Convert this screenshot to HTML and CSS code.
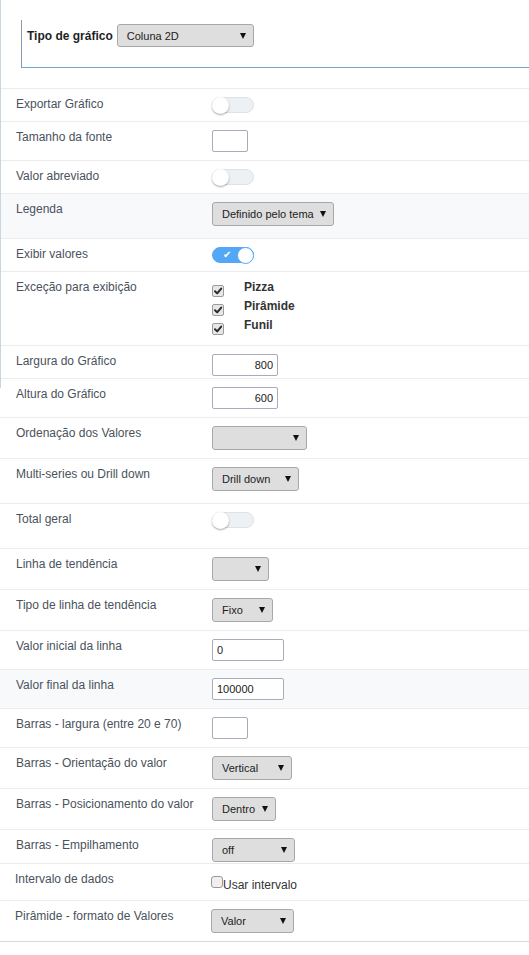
FILE: index.html
```html
<!DOCTYPE html>
<html lang="pt">
<head>
<meta charset="utf-8">
<title>Configuração do gráfico</title>
<link rel="stylesheet" href="styles.css">
</head>
<body>
<div class="page">
  <div class="head">
    <div class="fset">
      <span class="fset-label">Tipo de gráfico</span>
      <div class="sel sel-main"><span>Coluna 2D</span><svg class="arr" width="6" height="6" viewBox="0 0 6 6"><polygon points="0,0 6,0 3,6"/></svg></div>
    </div>
  </div>

  <div class="rows">
    <div class="row h33">
      <div class="lbl">Exportar Gráfico</div>
      <div class="ctl"><span class="tog"><span class="knob"></span></span></div>
    </div>
    <div class="row h39">
      <div class="lbl">Tamanho da fonte</div>
      <div class="ctl"><input class="txt w36" type="text" value=""></div>
    </div>
    <div class="row h33">
      <div class="lbl">Valor abreviado</div>
      <div class="ctl"><span class="tog"><span class="knob"></span></span></div>
    </div>
    <div class="row h45 alt">
      <div class="lbl">Legenda</div>
      <div class="ctl"><div class="sel w122"><span>Definido pelo tema</span><svg class="arr" width="6" height="6" viewBox="0 0 6 6"><polygon points="0,0 6,0 3,6"/></svg></div></div>
    </div>
    <div class="row h33">
      <div class="lbl">Exibir valores</div>
      <div class="ctl"><span class="tog on"><span class="tick">✔</span><span class="knob"></span></span></div>
    </div>
    <div class="row h74">
      <div class="lbl">Exceção para exibição</div>
      <div class="ctl checks">
        <div class="chk-line"><span class="cb"><svg width="10" height="10" viewBox="0 0 10 10"><path d="M2 5.2 L4.2 7.4 L8.2 2.6" /></svg></span><span class="chk-text">Pizza</span></div>
        <div class="chk-line"><span class="cb"><svg width="10" height="10" viewBox="0 0 10 10"><path d="M2 5.2 L4.2 7.4 L8.2 2.6" /></svg></span><span class="chk-text">Pirâmide</span></div>
        <div class="chk-line"><span class="cb"><svg width="10" height="10" viewBox="0 0 10 10"><path d="M2 5.2 L4.2 7.4 L8.2 2.6" /></svg></span><span class="chk-text">Funil</span></div>
      </div>
    </div>
    <div class="row h33">
      <div class="lbl">Largura do Gráfico</div>
      <div class="ctl"><input class="txt w66 right" type="text" value="800"></div>
    </div>
    <div class="row h39">
      <div class="lbl">Altura do Gráfico</div>
      <div class="ctl"><input class="txt w66 right" type="text" value="600"></div>
    </div>
    <div class="row h41">
      <div class="lbl">Ordenação dos Valores</div>
      <div class="ctl"><div class="sel w95"><span></span><svg class="arr" width="6" height="6" viewBox="0 0 6 6"><polygon points="0,0 6,0 3,6"/></svg></div></div>
    </div>
    <div class="row h45">
      <div class="lbl">Multi-series ou Drill down</div>
      <div class="ctl"><div class="sel w87"><span>Drill down</span><svg class="arr" width="6" height="6" viewBox="0 0 6 6"><polygon points="0,0 6,0 3,6"/></svg></div></div>
    </div>
    <div class="row h45">
      <div class="lbl">Total geral</div>
      <div class="ctl"><span class="tog"><span class="knob"></span></span></div>
    </div>
    <div class="row h41">
      <div class="lbl">Linha de tendência</div>
      <div class="ctl"><div class="sel w57"><span></span><svg class="arr" width="6" height="6" viewBox="0 0 6 6"><polygon points="0,0 6,0 3,6"/></svg></div></div>
    </div>
    <div class="row h41">
      <div class="lbl">Tipo de linha de tendência</div>
      <div class="ctl"><div class="sel w61"><span>Fixo</span><svg class="arr" width="6" height="6" viewBox="0 0 6 6"><polygon points="0,0 6,0 3,6"/></svg></div></div>
    </div>
    <div class="row h39">
      <div class="lbl">Valor inicial da linha</div>
      <div class="ctl"><input class="txt w72" type="text" value="0"></div>
    </div>
    <div class="row h39 alt">
      <div class="lbl">Valor final da linha</div>
      <div class="ctl"><input class="txt w72" type="text" value="100000"></div>
    </div>
    <div class="row h39">
      <div class="lbl">Barras - largura (entre 20 e 70)</div>
      <div class="ctl"><input class="txt w36" type="text" value=""></div>
    </div>
    <div class="row h41">
      <div class="lbl">Barras - Orientação do valor</div>
      <div class="ctl"><div class="sel w80"><span>Vertical</span><svg class="arr" width="6" height="6" viewBox="0 0 6 6"><polygon points="0,0 6,0 3,6"/></svg></div></div>
    </div>
    <div class="row h41">
      <div class="lbl">Barras - Posicionamento do valor</div>
      <div class="ctl"><div class="sel w64"><span>Dentro</span><svg class="arr" width="6" height="6" viewBox="0 0 6 6"><polygon points="0,0 6,0 3,6"/></svg></div></div>
    </div>
    <div class="row h34">
      <div class="lbl">Barras - Empilhamento</div>
      <div class="ctl"><div class="sel w83"><span>off</span><svg class="arr" width="6" height="6" viewBox="0 0 6 6"><polygon points="0,0 6,0 3,6"/></svg></div></div>
    </div>
    <div class="row h37 shifted">
      <div class="lbl">Intervalo de dados</div>
      <div class="ctl interval"><span class="cb off"></span><span class="int-text">Usar intervalo</span></div>
    </div>
    <div class="row h41 shifted last">
      <div class="lbl">Pirâmide - formato de Valores</div>
      <div class="ctl"><div class="sel w83"><span>Valor</span><svg class="arr" width="6" height="6" viewBox="0 0 6 6"><polygon points="0,0 6,0 3,6"/></svg></div></div>
    </div>
  </div>
</div>
</body>
</html>
```

FILE: styles.css
```css
* { box-sizing: border-box; }

html, body {
  margin: 0;
  padding: 0;
  background: #ffffff;
}

body {
  font-family: "Liberation Sans", Arial, sans-serif;
  font-size: 12px;
  color: #4a525c;
}

.page {
  position: relative;
  width: 529px;
  padding-bottom: 14px;
}

.page::before {
  content: "";
  position: absolute;
  left: 0;
  top: 0;
  width: 1px;
  height: 388px;
  background: #c9d6df;
}

/* header fieldset */
.head {
  padding-top: 20px;
  margin-bottom: 20px;
}

.fset {
  margin-left: 21px;
  height: 48px;
  border-left: 1px solid #8d9aa6;
  border-bottom: 1px solid #6fa7cf;
  display: flex;
  align-items: flex-start;
  gap: 4px;
  padding: 4px 0 0 5px;
}

.fset-label {
  font-weight: bold;
  color: #1f1f1f;
  line-height: 14px;
  margin-top: 5px;
}

/* rows */
.row {
  display: flex;
  align-items: flex-start;
  border-top: 1px solid #ececec;
  padding-left: 16px;
}

.row.alt { background: #f8f9fb; }

.row.shifted { padding-left: 15px; }

.row.last { border-bottom: 1px solid #d3dade; }

.h33 { height: 33px; }
.h34 { height: 34px; }
.h37 { height: 37px; }
.h39 { height: 39px; }
.h41 { height: 41px; }
.h45 { height: 45px; }
.h74 { height: 74px; }
.row.last { height: 42px; }

.lbl {
  width: 196px;
  flex: none;
  line-height: 14px;
  padding-top: 8px;
  white-space: nowrap;
}

.ctl {
  padding-top: 8px;
  display: flex;
}

/* select */
.sel {
  height: 24px;
  display: flex;
  align-items: center;
  justify-content: space-between;
  padding: 0 7px 0 9px;
  background: #dedede;
  border: 1px solid #a8a8a8;
  border-radius: 3px;
  font-size: 11px;
  color: #222;
  white-space: nowrap;
}

.sel-main { width: 137px; height: 23px; }

.arr { fill: #111; flex: none; }

.w122 { width: 122px; }
.w95 { width: 95px; }
.w87 { width: 87px; }
.w57 { width: 57px; }
.w61 { width: 61px; }
.w80 { width: 80px; }
.w64 { width: 64px; }
.w83 { width: 83px; }

/* text inputs */
.txt {
  height: 22px;
  border: 1px solid #a7acb8;
  border-radius: 2px;
  background: #fff;
  font-family: "Liberation Sans", Arial, sans-serif;
  font-size: 11px;
  color: #222;
  padding: 0 4px;
  margin: 0;
  outline: none;
}

.txt.right { text-align: right; }

.w36 { width: 36px; }
.w66 { width: 66px; }
.w72 { width: 72px; }

/* toggles */
.tog {
  width: 42px;
  height: 16px;
  border-radius: 8px;
  background: #eef1f4;
  border: 1px solid #dde2e7;
  display: flex;
  align-items: center;
}

.knob {
  width: 17px;
  height: 17px;
  border-radius: 50%;
  background: #fff;
  box-shadow: 0 1px 2px rgba(0, 0, 0, 0.35);
  margin-left: -1px;
  flex: none;
}

.tog.on {
  background: #52a8f6;
  border-color: #52a8f6;
  justify-content: space-between;
}

.tog.on .knob {
  margin-left: 0;
  margin-right: -1px;
  border: 1px solid #52a8f6;
  box-shadow: none;
}

.tick {
  color: #fff;
  font-size: 10px;
  line-height: 10px;
  margin-left: 10px;
}

/* checkboxes */
.checks {
  flex-direction: column;
  padding-top: 8px;
}

.chk-line {
  display: flex;
  align-items: flex-start;
  height: 19px;
}

.cb {
  width: 12px;
  height: 12px;
  border: 1px solid #9b9b9b;
  border-radius: 2px;
  background: #e7e7e7;
  display: flex;
  align-items: center;
  justify-content: center;
  margin-top: 5px;
  flex: none;
}

.cb svg path {
  fill: none;
  stroke: #2b2b2b;
  stroke-width: 2;
  stroke-linecap: round;
  stroke-linejoin: round;
}

.chk-text {
  margin-left: 20px;
  font-weight: bold;
  color: #333;
  line-height: 14px;
}

.interval {
  padding-top: 12px;
  align-items: flex-start;
}

.cb.off {
  margin-top: 0;
  background: #efefef;
  border-color: #999;
  border-radius: 3px;
}

.int-text {
  color: #333;
  line-height: 14px;
  margin-top: 2px;
}
```
